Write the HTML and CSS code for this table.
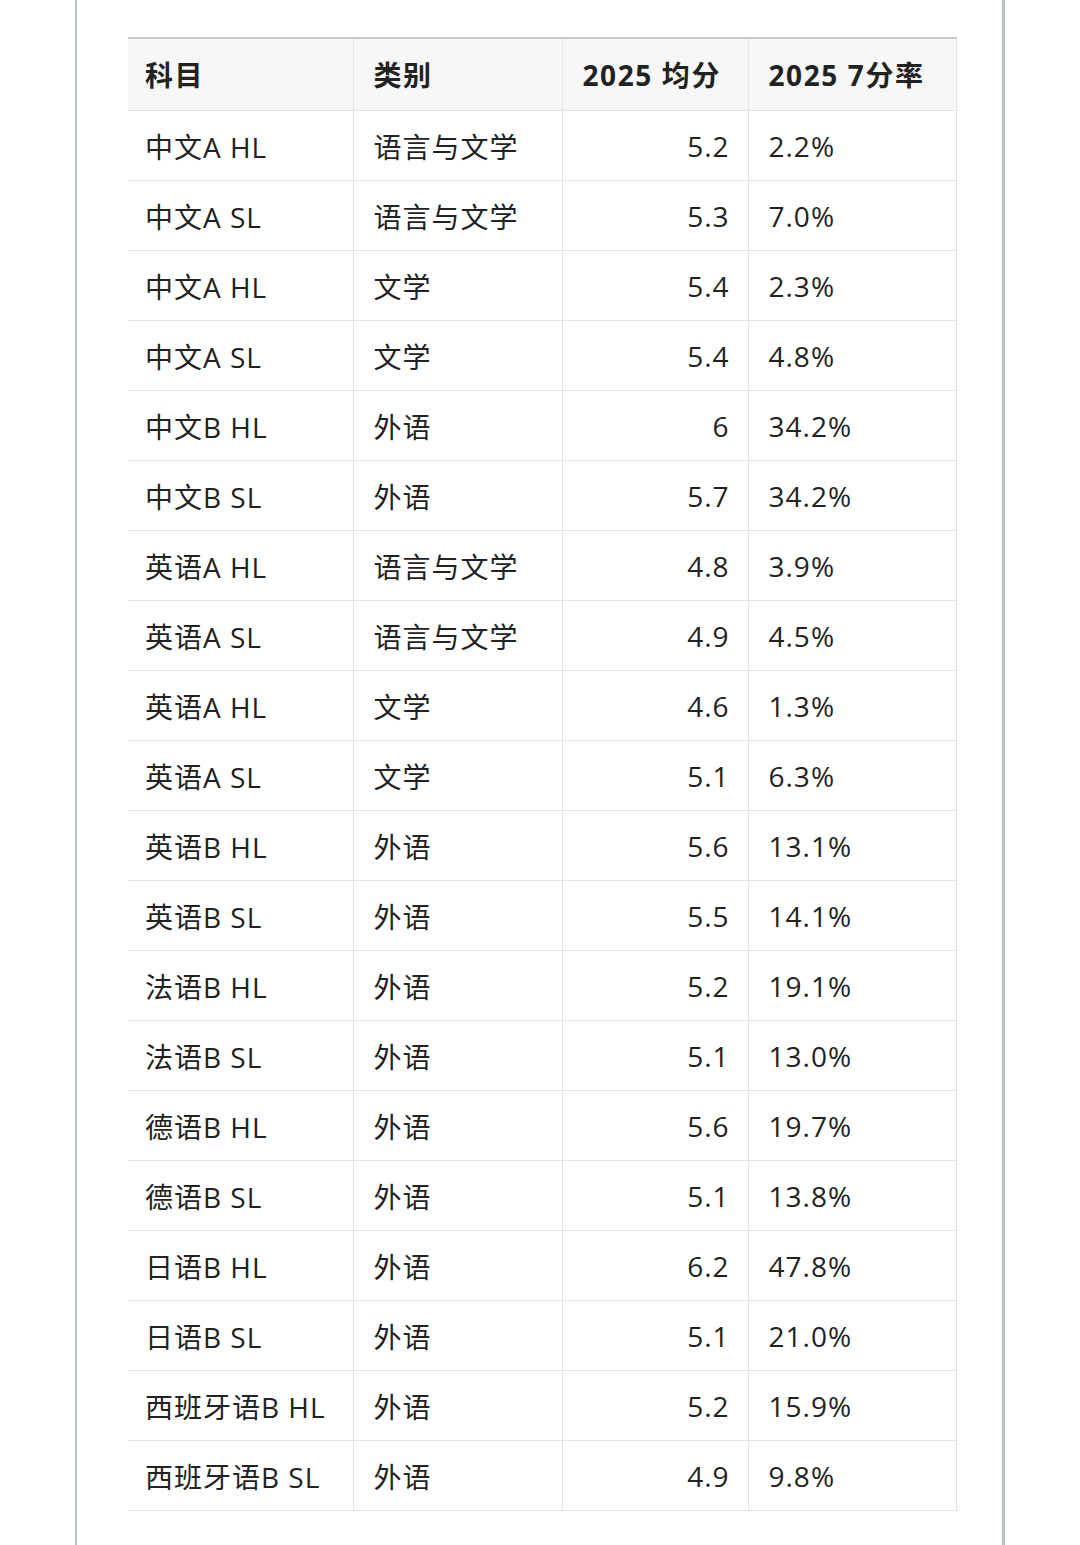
FILE: index.html
```html
<!DOCTYPE html>
<html lang="zh">
<head>
<meta charset="utf-8">
<link rel="stylesheet" href="styles.css">
</head>
<body>
<div class="page">
<table class="scores">
<colgroup><col class="c1"><col class="c2"><col class="c3"><col class="c4"></colgroup>
<thead>
<tr><th>科目</th><th>类别</th><th class="num">2025 均分</th><th>2025 7分率</th></tr>
</thead>
<tbody>
<tr><td>中文A HL</td><td>语言与文学</td><td class="num">5.2</td><td>2.2%</td></tr>
<tr><td>中文A SL</td><td>语言与文学</td><td class="num">5.3</td><td>7.0%</td></tr>
<tr><td>中文A HL</td><td>文学</td><td class="num">5.4</td><td>2.3%</td></tr>
<tr><td>中文A SL</td><td>文学</td><td class="num">5.4</td><td>4.8%</td></tr>
<tr><td>中文B HL</td><td>外语</td><td class="num">6</td><td>34.2%</td></tr>
<tr><td>中文B SL</td><td>外语</td><td class="num">5.7</td><td>34.2%</td></tr>
<tr><td>英语A HL</td><td>语言与文学</td><td class="num">4.8</td><td>3.9%</td></tr>
<tr><td>英语A SL</td><td>语言与文学</td><td class="num">4.9</td><td>4.5%</td></tr>
<tr><td>英语A HL</td><td>文学</td><td class="num">4.6</td><td>1.3%</td></tr>
<tr><td>英语A SL</td><td>文学</td><td class="num">5.1</td><td>6.3%</td></tr>
<tr><td>英语B HL</td><td>外语</td><td class="num">5.6</td><td>13.1%</td></tr>
<tr><td>英语B SL</td><td>外语</td><td class="num">5.5</td><td>14.1%</td></tr>
<tr><td>法语B HL</td><td>外语</td><td class="num">5.2</td><td>19.1%</td></tr>
<tr><td>法语B SL</td><td>外语</td><td class="num">5.1</td><td>13.0%</td></tr>
<tr><td>德语B HL</td><td>外语</td><td class="num">5.6</td><td>19.7%</td></tr>
<tr><td>德语B SL</td><td>外语</td><td class="num">5.1</td><td>13.8%</td></tr>
<tr><td>日语B HL</td><td>外语</td><td class="num">6.2</td><td>47.8%</td></tr>
<tr><td>日语B SL</td><td>外语</td><td class="num">5.1</td><td>21.0%</td></tr>
<tr><td>西班牙语B HL</td><td>外语</td><td class="num">5.2</td><td>15.9%</td></tr>
<tr><td>西班牙语B SL</td><td>外语</td><td class="num">4.9</td><td>9.8%</td></tr>
</tbody>
</table>
</div>
</body>
</html>
```

FILE: styles.css
```css
html, body {
  margin: 0;
  padding: 0;
  background: #ffffff;
}
body {
  font-family: "Open Sans", "Noto Sans CJK SC", sans-serif;
  color: #222222;
}
.page {
  margin-left: 75px;
  width: 930px;
  height: 1545px;
  box-sizing: border-box;
  border-left: 2px solid #b9c3c3;
  border-right: 3px solid #b9c3c3;
  padding-top: 37px;
  padding-left: 51px;
}
.scores {
  border-collapse: collapse;
  table-layout: fixed;
  width: 828px;
  font-size: 28px;
  letter-spacing: 1px;
}
.c1 { width: 225px; }
.c2 { width: 209px; }
.c3 { width: 186px; }
.c4 { width: 208px; }
.scores th,
.scores td {
  height: 70px;
  padding: 0 18px 0 20px;
  box-sizing: border-box;
  text-align: left;
  vertical-align: middle;
  border-bottom: 1px solid #e4e4e4;
  border-left: 1px solid #e4e4e4;
  white-space: nowrap;
}
.scores td {
  padding-top: 1px;
}
.scores th:first-child,
.scores td:first-child {
  border-left: none;
  padding-left: 17px;
}
.scores th:last-child,
.scores td:last-child {
  border-right: 1px solid #e4e4e4;
}
.scores thead tr {
  border-top: 2px solid #c9c9c9;
}
.scores th {
  background: #f7f7f7;
  font-weight: 700;
  height: 72px;
  letter-spacing: 1.6px;
}
.scores .num {
  text-align: right;
}
.scores th.num {
  text-align: left;
}
```
